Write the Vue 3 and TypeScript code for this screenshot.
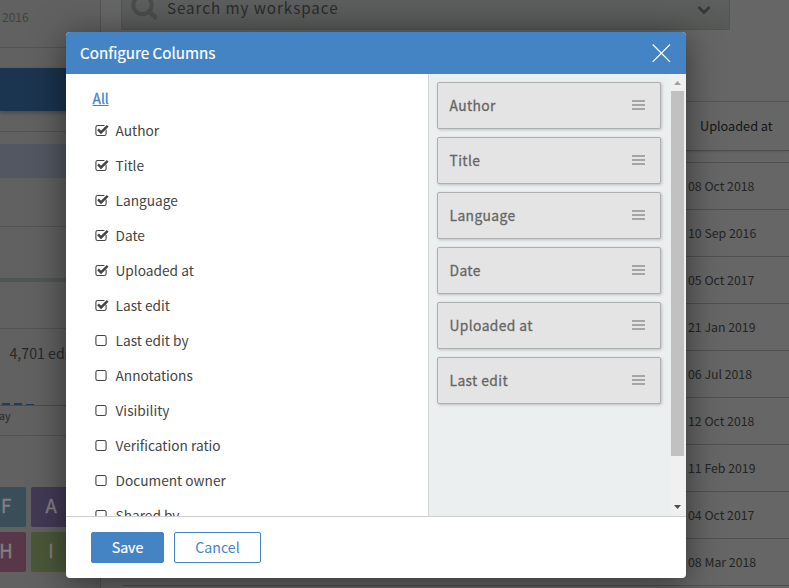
<script setup lang="ts">
import { ref, computed } from 'vue'

interface Column { label: string; on: boolean }

const columns = ref<Column[]>([
  { label: 'Author', on: true },
  { label: 'Title', on: true },
  { label: 'Language', on: true },
  { label: 'Date', on: true },
  { label: 'Uploaded at', on: true },
  { label: 'Last edit', on: true },
  { label: 'Last edit by', on: false },
  { label: 'Annotations', on: false },
  { label: 'Visibility', on: false },
  { label: 'Verification ratio', on: false },
  { label: 'Document owner', on: false },
  { label: 'Shared by', on: false },
])
const selected = computed(() => columns.value.filter((c) => c.on))
const dates = ['08 Oct 2018', '10 Sep 2016', '05 Oct 2017', '21 Jan 2019', '06 Jul 2018', '12 Oct 2018', '11 Feb 2019', '04 Oct 2017', '08 Mar 2018']
const tiles = [
  { letter: 'F', tone: 'teal' },
  { letter: 'A', tone: 'purple' },
  { letter: 'H', tone: 'pink' },
  { letter: 'I', tone: 'green' },
]
</script>

<template>
  <div class="screen">
    <aside class="side">
      <div class="year">2016</div>
      <div class="action"><div class="action-btn"></div></div>
      <div class="filter"><div class="filter-on"></div></div>
      <div class="blank"></div>
      <div class="blank low"></div>
      <div class="stats">
        <div class="edits">4,701 edits</div>
        <div class="bars"><i></i><i></i><i class="thin"></i></div>
        <div class="day">ay</div>
      </div>
      <div class="tiles">
        <div v-for="t in tiles" :key="t.letter" class="tile" :class="t.tone">{{ t.letter }}</div>
      </div>
    </aside>
    <main class="main">
      <div class="search">
        <svg class="lens" width="28" height="22" viewBox="0 0 28 22"><circle cx="11.5" cy="5" r="9.2" fill="none" stroke="currentColor" stroke-width="4" /><path d="M18.5 11.5 24 17" stroke="currentColor" stroke-width="4.6" stroke-linecap="round" /></svg>
        <span>Search my workspace</span>
        <svg class="chev" width="14" height="10" viewBox="0 0 14 10"><path d="M1.5 2 7 7.5 12.5 2" fill="none" stroke="currentColor" stroke-width="2.8" /></svg>
      </div>
      <div class="thead">Uploaded at</div>
      <div class="rows">
        <div v-for="d in dates" :key="d" class="row">{{ d }}</div>
      </div>
    </main>

    <section class="dialog">
      <header class="head">
        <h1>Configure Columns</h1>
        <svg width="20" height="20" viewBox="0 0 20 20"><path d="M1.7 1.5 19 18.8M19 1.5 1.7 18.8" stroke="currentColor" stroke-width="1.2" /></svg>
      </header>
      <div class="body">
        <div class="choices">
          <a class="all">All</a>
          <div v-for="c in columns" :key="c.label" class="choice" @click="c.on = !c.on">
            <svg width="14" height="13" viewBox="0 0 14 13">
              <rect x=".9" y="1.5" width="10.2" height="10" rx="1.8" fill="none" stroke="currentColor" stroke-width="1.1" />
              <template v-if="c.on">
                <path d="M9.5 2h3v4" fill="none" stroke="#fff" stroke-width="2.5" />
                <path d="M3 5.4 6 8.4 12.7 1.9" fill="none" stroke="currentColor" stroke-width="2.5" />
              </template>
            </svg>
            <span>{{ c.label }}</span>
          </div>
        </div>
        <div class="order">
          <div class="cards">
            <div v-for="c in selected" :key="c.label" class="card">
              <span>{{ c.label }}</span>
              <div class="grip"><i></i><i></i><i></i></div>
            </div>
          </div>
          <div class="scroll">
            <svg width="7" height="4" viewBox="0 0 7 4"><path d="M0 4 3.5 0 7 4z" fill="#a0a0a0" /></svg>
            <div class="thumb"></div>
            <svg width="7" height="4" viewBox="0 0 7 4"><path d="M0 0 3.5 4 7 0z" fill="#4d4d4d" /></svg>
          </div>
        </div>
      </div>
      <footer class="foot">
        <button class="btn save">Save</button>
        <button class="btn cancel">Cancel</button>
      </footer>
    </section>
  </div>
</template>

<style>
body { margin: 0; overflow: hidden; }
</style>

<style scoped>
* { box-sizing: border-box; }
.screen {
  position: relative; display: flex; width: 789px; height: 588px; overflow: hidden;
  background: #666; color: #242424; font: 13.8px/20px "Noto Sans CJK SC", "Source Sans Pro", sans-serif;
}
.side { flex: none; width: 101px; background: #606160; border-right: 1px solid #525352; }
.year { height: 48px; padding: 7px 2px; font-size: 12px; color: #404242; border-bottom: 1px solid #525352; }
.action { height: 84px; padding-top: 20px; border-bottom: 1px solid #525352; }
.action-btn { height: 43px; background: #1b344f; box-shadow: 0 2px 4px rgba(0, 0, 0, .25); }
.filter { height: 95px; padding-top: 12px; border-bottom: 1px solid #525352; }
.filter-on { height: 34px; background: #525761; }
.blank { height: 55px; border-bottom: 4px solid #515554; }
.blank.low { height: 47px; border-bottom: 1px solid #525352; }
.stats { height: 107px; padding-top: 14px; border-bottom: 1px solid #525352; white-space: nowrap; }
.edits { padding-left: 9.5px; font-size: 14.2px; color: #282828; }
.bars { display: flex; gap: 4px; height: 43px; padding-left: 2px; align-items: flex-end; border-bottom: 1px solid #4b4c4c; }
.bars i { width: 8px; height: 2px; background: #1d3d5e; }
.bars i.thin { height: 1px; }
.day { margin-left: -1px; font-size: 10.5px; color: #282828; }
.tiles { display: grid; grid-template-columns: 40px 40px; grid-auto-rows: 40px; gap: 5px; margin: 51px 0 0 -14px; }
.tile { border-radius: 2px; color: #808080; font-size: 18.5px; line-height: 37px; text-align: center; -webkit-text-stroke: .4px #808080; }
.teal { background: #3a4e59; }
.purple { background: #423a56; }
.pink { background: #583848; }
.green { background: #4a5839; }
.main { flex: 1; padding-left: 20px; }
.search {
  display: flex; width: 609px; height: 30px; padding: 0 18px 0 9px; border: 1px solid #525352; border-top: 0;
  border-radius: 0 0 2px 2px; background: linear-gradient(#5d5f5f, #575957); color: #2a2a2a; letter-spacing: .95px; font-size: 15.2px;
}
.search span { margin: -3px 0 0 8px; }
.lens { color: #4b4b4b; }
.chev { margin: 5px 0 0 auto; color: #36383c; }
.thead { height: 50px; margin-top: 71px; padding: 14px 0 0 579px; font-size: 12.7px; color: #151515; border-top: 1px solid #565656; border-bottom: 1px solid #4d4d4d; box-shadow: 0 1px 2px rgba(0, 0, 0, .12); }
.rows { margin: 11px 0 0 2px; border-top: 1px solid #505050; }
.row { height: 47px; padding: 13px 0 0 565px; font-size: 12.3px; border-bottom: 1px solid #505050; }

.dialog {
  position: absolute; left: 66px; top: 32px; display: flex; flex-direction: column; width: 620px; height: 546px;
  overflow: hidden; border-radius: 4px; background: #fff; color: #444; box-shadow: 0 5px 35px rgba(0, 0, 0, .5);
}
.head { display: flex; flex: none; justify-content: space-between; height: 42px; padding: 11px 15px 0 14px; background: #4484c5; color: #fff; }
.head h1 { margin: -1px 0 0; font-size: 15.2px; line-height: 20px; font-weight: 400; -webkit-text-stroke: .2px #fff; }
.body { display: flex; height: 442px; }
.choices { width: 362px; padding: 14px 0 0 26px; overflow: hidden; }
.all { display: block; width: max-content; height: 20px; margin: 0 0 5px .5px; color: #4484c5; text-decoration: underline; -webkit-text-stroke: .3px #4484c5; }
.choice { display: flex; align-items: center; height: 35px; padding-left: 3px; }
.choice span { margin: -2px 0 0 6.5px; font-size: 13.7px; }
.order { display: flex; flex: 1; background: #ebeff0; border-left: 1px solid #d2d6d7; }
.cards { display: flex; flex: 1; flex-direction: column; gap: 8px; padding: 8px 10px 0 8px; }
.card {
  display: flex; align-items: center; justify-content: space-between; height: 47px; padding: 0 15px 0 11.5px;
  border: 1px solid #aeb0b0; border-radius: 2px; background: #e4e4e4; box-shadow: 1px 1px 3px rgba(0, 0, 0, .2);
  color: #666; letter-spacing: .4px; -webkit-text-stroke: .3px #666;
}
.card span { margin-top: -2px; }
.grip { display: grid; gap: 2px; width: 13px; margin-top: -1px; }
.grip i { height: 2px; background: #a5a5a5; }
.scroll { display: flex; flex-direction: column; align-items: center; width: 15px; padding: 7px 2px 7px 0; background: #f0f0f0; }
.thumb { width: 13px; height: 365px; margin: 6px 0 auto; background: #c1c1c1; }
.foot { display: flex; flex: 1; gap: 10px; padding: 15px 25px; border-top: 1px solid #cfcfcf; }
.btn { width: 87px; height: 31px; padding: 0; border: 1px solid #4484c5; border-radius: 2px; background: #fff; color: #4484c5; font: 14.2px/27px "Noto Sans CJK SC", sans-serif; }
.save { width: 73px; background: #4484c5; color: #fff; -webkit-text-stroke: .2px #fff; }
</style>
